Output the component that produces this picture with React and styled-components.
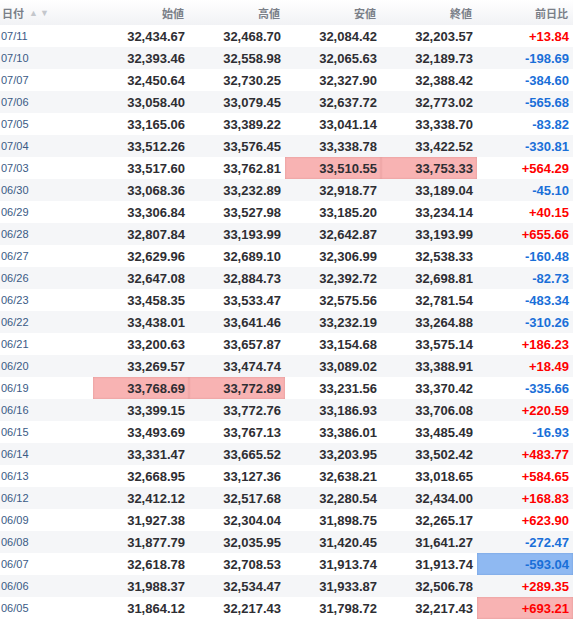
import React from "react";
import styled, { createGlobalStyle, css } from "styled-components";

const GlobalStyle = createGlobalStyle`
  body {
    margin: 0;
    background: #fff;
    font-family: "Liberation Sans", "Noto Sans CJK JP", sans-serif;
  }
`;

const rows = [
  ["07/11", "32,434.67", "32,468.70", "32,084.42", "32,203.57", "+13.84"],
  ["07/10", "32,393.46", "32,558.98", "32,065.63", "32,189.73", "-198.69"],
  ["07/07", "32,450.64", "32,730.25", "32,327.90", "32,388.42", "-384.60"],
  ["07/06", "33,058.40", "33,079.45", "32,637.72", "32,773.02", "-565.68"],
  ["07/05", "33,165.06", "33,389.22", "33,041.14", "33,338.70", "-83.82"],
  ["07/04", "33,512.26", "33,576.45", "33,338.78", "33,422.52", "-330.81"],
  ["07/03", "33,517.60", "33,762.81", "33,510.55", "33,753.33", "+564.29", { 3: "low", 4: "low" }],
  ["06/30", "33,068.36", "33,232.89", "32,918.77", "33,189.04", "-45.10"],
  ["06/29", "33,306.84", "33,527.98", "33,185.20", "33,234.14", "+40.15"],
  ["06/28", "32,807.84", "33,193.99", "32,642.87", "33,193.99", "+655.66"],
  ["06/27", "32,629.96", "32,689.10", "32,306.99", "32,538.33", "-160.48"],
  ["06/26", "32,647.08", "32,884.73", "32,392.72", "32,698.81", "-82.73"],
  ["06/23", "33,458.35", "33,533.47", "32,575.56", "32,781.54", "-483.34"],
  ["06/22", "33,438.01", "33,641.46", "33,232.19", "33,264.88", "-310.26"],
  ["06/21", "33,200.63", "33,657.87", "33,154.68", "33,575.14", "+186.23"],
  ["06/20", "33,269.57", "33,474.74", "33,089.02", "33,388.91", "+18.49"],
  ["06/19", "33,768.69", "33,772.89", "33,231.56", "33,370.42", "-335.66", { 1: "low", 2: "low" }],
  ["06/16", "33,399.15", "33,772.76", "33,186.93", "33,706.08", "+220.59"],
  ["06/15", "33,493.69", "33,767.13", "33,386.01", "33,485.49", "-16.93"],
  ["06/14", "33,331.47", "33,665.52", "33,203.95", "33,502.42", "+483.77"],
  ["06/13", "32,668.95", "33,127.36", "32,638.21", "33,018.65", "+584.65"],
  ["06/12", "32,412.12", "32,517.68", "32,280.54", "32,434.00", "+168.83"],
  ["06/09", "31,927.38", "32,304.04", "31,898.75", "32,265.17", "+623.90"],
  ["06/08", "31,877.79", "32,035.95", "31,420.45", "31,641.27", "-272.47"],
  ["06/07", "32,618.78", "32,708.53", "31,913.74", "31,913.74", "-593.04", { 5: "down" }],
  ["06/06", "31,988.37", "32,534.47", "31,933.87", "32,506.78", "+289.35"],
  ["06/05", "31,864.12", "32,217.43", "31,798.72", "32,217.43", "+693.21", { 5: "low" }],
];

// date column is 93px, the five price columns share the rest
const Table = styled.div`
  width: 573px;
  display: grid;
  grid-template-columns: 93px repeat(5, 96px);
`;

const Head = styled.div`
  display: contents;
`;

const HeadCell = styled.div`
  height: 25px;
  display: flex;
  align-items: center;
  justify-content: ${(p) => (p.$left ? "flex-start" : "flex-end")};
  padding: ${(p) => (p.$left ? "0 0 0 2px" : "0 5px 0 0")};
  font-size: 11px;
  font-weight: bold;
  color: #7a7f88;
  background: linear-gradient(#ffffff, #f1f2f5);
`;

const Arrows = styled.span`
  margin-left: 5px;
  font-size: 9px;
  color: #c4c7cc;
  letter-spacing: 2px;
`;

const Row = styled.div`
  display: contents;
`;

const Cell = styled.div`
  height: 22px;
  display: flex;
  align-items: center;
  background: ${(p) => (p.$odd ? "#f5f6f8" : "#ffffff")};
`;

const DateCell = styled(Cell)`
  padding-left: 1px;
  font-size: 11px;
  color: #3a5a85;
`;

const hl = {
  low: css`
    background: #f8b3b3;
    box-shadow: inset 0 0 2px rgba(180, 90, 90, 0.4);
  `,
  down: css`
    background: #8fb9f2;
    box-shadow: inset 0 0 2px rgba(60, 110, 180, 0.4);
  `,
};

const NumCell = styled(Cell)`
  justify-content: flex-end;
  padding-right: 4px;
  font-size: 13px;
  font-weight: bold;
  color: ${(p) => p.$color || "#2e2e33"};
  ${(p) => p.$hl && hl[p.$hl]}
`;

const heads = ["始値", "高値", "安値", "終値", "前日比"];

const changeColor = (v) => (v.startsWith("+") ? "#ff0000" : "#1a6fd8");

export default function App() {
  return (
    <>
      <GlobalStyle />
      <Table>
        <Head>
          <HeadCell $left>
            日付<Arrows>▲▼</Arrows>
          </HeadCell>
          {heads.map((h) => (
            <HeadCell key={h}>{h}</HeadCell>
          ))}
        </Head>
        {rows.map((r, i) => {
          const marks = r[6] || {};
          const odd = i % 2 === 1;
          return (
            <Row key={r[0]}>
              <DateCell $odd={odd}>{r[0]}</DateCell>
              {r.slice(1, 6).map((v, j) => (
                <NumCell
                  key={j}
                  $odd={odd}
                  $hl={marks[j + 1]}
                  $color={j === 4 ? changeColor(v) : undefined}
                >
                  {v}
                </NumCell>
              ))}
            </Row>
          );
        })}
      </Table>
    </>
  );
}
